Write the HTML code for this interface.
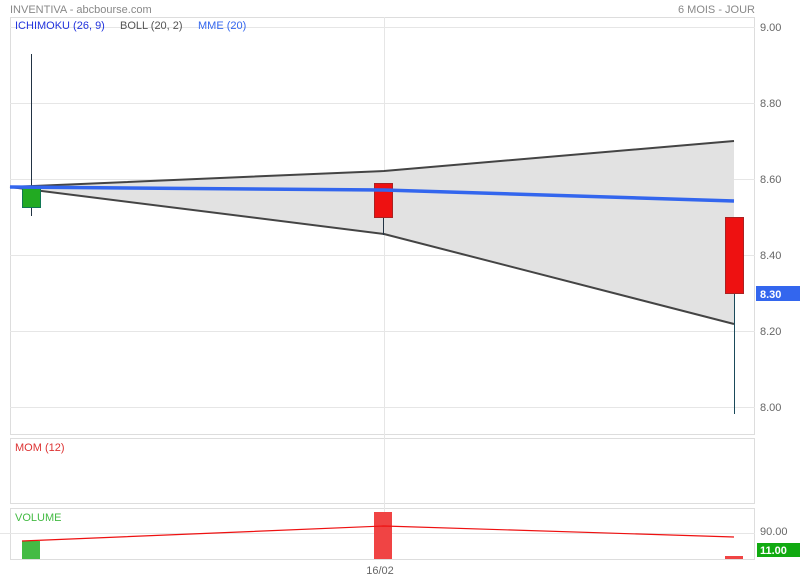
<!DOCTYPE html>
<html><head><style>
body{margin:0;width:800px;height:580px;background:#fff;overflow:hidden;font-family:"Liberation Sans",sans-serif;}
svg text{font-family:"Liberation Sans",sans-serif;font-size:11px;}
</style></head><body>
<svg width="800" height="580" xmlns="http://www.w3.org/2000/svg">
<rect x="10.5" y="17.5" width="744" height="417" fill="none" stroke="#ddd"/>
<rect x="10.5" y="438.5" width="744" height="65" fill="none" stroke="#ddd"/>
<rect x="10.5" y="508.5" width="744" height="51" fill="none" stroke="#ddd"/>
<g stroke="#e6e6e6" stroke-width="1">
<line x1="10" y1="27.5" x2="755" y2="27.5"/>
<line x1="10" y1="103.5" x2="755" y2="103.5"/>
<line x1="10" y1="179.5" x2="755" y2="179.5"/>
<line x1="10" y1="255.5" x2="755" y2="255.5"/>
<line x1="10" y1="331.5" x2="755" y2="331.5"/>
<line x1="10" y1="407.5" x2="755" y2="407.5"/>
<line x1="384.5" y1="17" x2="384.5" y2="559"/>
<line x1="0" y1="533.5" x2="755" y2="533.5"/>
</g>
<polygon points="10,187 384,171 734,141 734,324 384,234" fill="#e2e2e2"/>
<polyline points="10,187 384,171 734,141" fill="none" stroke="#444" stroke-width="2"/>
<polyline points="10,187 384,234 734,324" fill="none" stroke="#444" stroke-width="2"/>
<line x1="31.5" y1="54" x2="31.5" y2="216" stroke="#234"/>
<rect x="22.5" y="187.5" width="18" height="20" fill="#22aa22" stroke="#175"/>
<line x1="383.5" y1="183" x2="383.5" y2="235" stroke="#234"/>
<rect x="374.5" y="183.5" width="18" height="34" fill="#ee1111" stroke="#a22"/>
<line x1="734.5" y1="217" x2="734.5" y2="414" stroke="#1a4a5a"/>
<rect x="725.5" y="217.5" width="18" height="76" fill="#ee1111" stroke="#a22"/>
<polyline points="10,187 384,190 734,201" fill="none" stroke="#3366ee" stroke-width="3.5"/>
<rect x="22" y="541" width="18" height="18" fill="#44bb44"/>
<rect x="374" y="512" width="18" height="47" fill="#f04444"/>
<rect x="725" y="556" width="18" height="3" fill="#f04444"/>
<polyline points="22,541 384,526 734,537" fill="none" stroke="#ee1111" stroke-width="1.2"/>
<text x="10" y="13" fill="#888">INVENTIVA - abcbourse.com</text>
<text x="755" y="13" fill="#888" text-anchor="end">6 MOIS - JOUR</text>
<text x="15" y="29" fill="#2233dd">ICHIMOKU (26, 9)</text>
<text x="120" y="29" fill="#555">BOLL (20, 2)</text>
<text x="198" y="29" fill="#3366ee">MME (20)</text>
<text x="15" y="451" fill="#dd3333">MOM (12)</text>
<text x="15" y="521" fill="#44bb44">VOLUME</text>
<g fill="#666">
<text x="760" y="31">9.00</text>
<text x="760" y="107">8.80</text>
<text x="760" y="183">8.60</text>
<text x="760" y="259">8.40</text>
<text x="760" y="335">8.20</text>
<text x="760" y="411">8.00</text>
<text x="760" y="535">90.00</text>
<text x="380" y="574" text-anchor="middle">16/02</text>
</g>
<rect x="756" y="286" width="44" height="15" fill="#3366ee"/>
<text x="760" y="298" fill="#fff" font-weight="bold">8.30</text>
<rect x="757" y="543" width="43" height="14" fill="#11aa11"/>
<text x="760" y="554" fill="#fff" font-weight="bold">11.00</text>
</svg>
</body></html>
